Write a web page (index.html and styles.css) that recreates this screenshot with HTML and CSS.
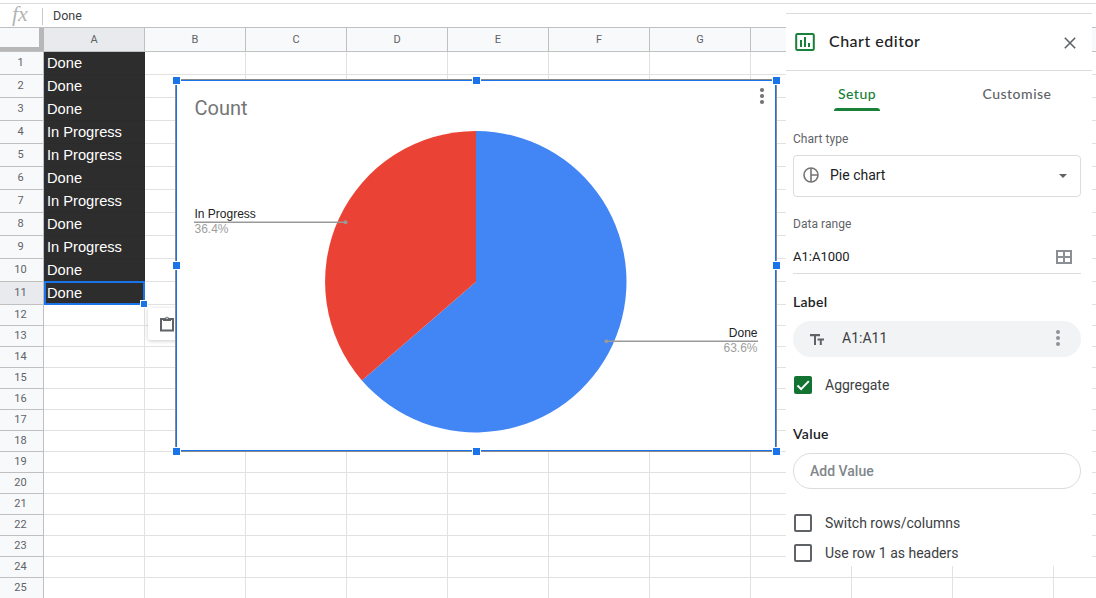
FILE: index.html
```html
<!DOCTYPE html>
<html lang="en">
<head>
    <meta charset="UTF-8">
    <meta name="viewport" content="width=device-width, initial-scale=1.0">
    <title>Chart editor</title>
    <link rel="stylesheet" href="styles.css">
</head>
<body>
    <div class="formula-bar">
        <span class="fx">fx</span>
        <span class="formula">Done</span>
    </div>

    <div class="sheet">
        <div class="col-heads">
            <div class="corner"></div>
            <div class="col-head active">A</div>
            <div class="col-head">B</div>
            <div class="col-head">C</div>
            <div class="col-head">D</div>
            <div class="col-head">E</div>
            <div class="col-head">F</div>
            <div class="col-head">G</div>
            <div class="col-head"></div>
            <div class="col-head"></div>
            <div class="col-head"></div>
        </div>
        <div class="row filled"><div class="row-num">1</div><div class="cell">Done</div><div class="rest"></div></div>
        <div class="row filled"><div class="row-num">2</div><div class="cell">Done</div><div class="rest"></div></div>
        <div class="row filled"><div class="row-num">3</div><div class="cell">Done</div><div class="rest"></div></div>
        <div class="row filled"><div class="row-num">4</div><div class="cell">In Progress</div><div class="rest"></div></div>
        <div class="row filled"><div class="row-num">5</div><div class="cell">In Progress</div><div class="rest"></div></div>
        <div class="row filled"><div class="row-num">6</div><div class="cell">Done</div><div class="rest"></div></div>
        <div class="row filled"><div class="row-num">7</div><div class="cell">In Progress</div><div class="rest"></div></div>
        <div class="row filled"><div class="row-num">8</div><div class="cell">Done</div><div class="rest"></div></div>
        <div class="row filled"><div class="row-num">9</div><div class="cell">In Progress</div><div class="rest"></div></div>
        <div class="row filled"><div class="row-num">10</div><div class="cell">Done</div><div class="rest"></div></div>
        <div class="row filled selected"><div class="row-num">11</div><div class="cell">Done<span class="fill-handle"></span></div><div class="rest"></div></div>
        <div class="row"><div class="row-num">12</div><div class="cell"></div><div class="rest"></div></div>
        <div class="row"><div class="row-num">13</div><div class="cell"></div><div class="rest"></div></div>
        <div class="row"><div class="row-num">14</div><div class="cell"></div><div class="rest"></div></div>
        <div class="row"><div class="row-num">15</div><div class="cell"></div><div class="rest"></div></div>
        <div class="row"><div class="row-num">16</div><div class="cell"></div><div class="rest"></div></div>
        <div class="row"><div class="row-num">17</div><div class="cell"></div><div class="rest"></div></div>
        <div class="row"><div class="row-num">18</div><div class="cell"></div><div class="rest"></div></div>
        <div class="row"><div class="row-num">19</div><div class="cell"></div><div class="rest"></div></div>
        <div class="row"><div class="row-num">20</div><div class="cell"></div><div class="rest"></div></div>
        <div class="row"><div class="row-num">21</div><div class="cell"></div><div class="rest"></div></div>
        <div class="row"><div class="row-num">22</div><div class="cell"></div><div class="rest"></div></div>
        <div class="row"><div class="row-num">23</div><div class="cell"></div><div class="rest"></div></div>
        <div class="row"><div class="row-num">24</div><div class="cell"></div><div class="rest"></div></div>
        <div class="row"><div class="row-num">25</div><div class="cell"></div><div class="rest"></div></div>
    </div>

    <div class="paste-button">
        <svg width="14" height="17" viewBox="0 0 14 17">
            <path d="M1 4h12v11.5H1z" fill="none" stroke="#5f6368" stroke-width="2"/>
            <path d="M3 3h2.2a1.9 1.9 0 0 1 3.6 0H11v3H3z" fill="#5f6368"/>
            <circle cx="7" cy="3.2" r=".8" fill="#fff"/>
        </svg>
    </div>

    <div class="chart">
        <svg class="chart-svg" width="598" height="369" viewBox="177 81 598 369">
            <text class="chart-title" x="194.5" y="115">Count</text>
            <path d="M476 281.7V131A150.7 150.7 0 1 1 361.9 380.4Z" fill="#4285f4"/>
            <path d="M476 281.7L361.9 380.4A150.7 150.7 0 0 1 476 131Z" fill="#ea4335"/>
            <path d="M194 222.2h152M606 341.2h152" stroke="#999" stroke-width="1.5" fill="none"/>
            <circle cx="345.5" cy="222.2" r="2" fill="#999"/>
            <circle cx="606.5" cy="341.2" r="2" fill="#999"/>
            <text class="slice-name" x="194.5" y="218">In Progress</text>
            <text class="slice-pct" x="194.5" y="233">36.4%</text>
            <text class="slice-name" x="757.5" y="337" text-anchor="end">Done</text>
            <text class="slice-pct" x="757.5" y="352" text-anchor="end">63.6%</text>
            <g fill="#757575">
                <circle cx="762" cy="90" r="2.1"/>
                <circle cx="762" cy="96" r="2.1"/>
                <circle cx="762" cy="102" r="2.1"/>
            </g>
        </svg>
        <span class="handle top left"></span>
        <span class="handle top center"></span>
        <span class="handle top right"></span>
        <span class="handle middle left"></span>
        <span class="handle middle right"></span>
        <span class="handle bottom left"></span>
        <span class="handle bottom center"></span>
        <span class="handle bottom right"></span>
    </div>

    <div class="editor">
        <div class="editor-head">
            <svg width="20" height="18" viewBox="0 0 20 18">
                <rect x="1.2" y="1" width="17.6" height="16" rx="1.2" fill="none" stroke="#188038" stroke-width="2"/>
                <path d="M5 7h2v7H5zM9 4h2v10H9zM13 10h2v4h-2z" fill="#188038"/>
            </svg>
            <h2>Chart editor</h2>
            <svg class="close" width="12" height="12" viewBox="0 0 12 12">
                <path d="M.8.8l10.4 10.4M11.2.8L.8 11.2" stroke="#5f6368" stroke-width="1.6"/>
            </svg>
        </div>
        <div class="tabs">
            <div class="tab active">Setup</div>
            <div class="tab">Customise</div>
        </div>
        <div class="editor-body">
            <div class="small-label">Chart type</div>
            <div class="select">
                <svg width="16" height="16" viewBox="0 0 16 16">
                    <path d="M8 1v14M8 8h7" stroke="#757575" stroke-width="1.6"/>
                    <circle cx="8" cy="8" r="7" fill="none" stroke="#757575" stroke-width="1.6"/>
                </svg>
                <span>Pie chart</span>
                <svg class="arrow" width="8" height="4" viewBox="0 0 8 4"><path d="M0 0h8L4 4z" fill="#5f6368"/></svg>
            </div>

            <div class="small-label range-label">Data range</div>
            <div class="range">
                <span>A1:A1000</span>
                <svg width="16" height="14" viewBox="0 0 16 14">
                    <path d="M1 1h14v12H1zM8 1v12M1 7h14" fill="none" stroke="#8b8f94" stroke-width="2"/>
                </svg>
            </div>

            <h3>Label</h3>
            <div class="pill filled-pill">
                <svg class="text-icon" width="14" height="12" viewBox="0 0 14 12">
                    <path d="M0 0h10v2.2H6V11H4V2.2H0zM7.5 4.5H14v2h-2.2V11H9.8V6.5H7.5z" fill="#5f6368"/>
                </svg>
                <span>A1:A11</span>
                <svg class="dots" width="4" height="16" viewBox="0 0 4 16" fill="#8f9398">
                    <circle cx="2" cy="2" r="2"/><circle cx="2" cy="8" r="2"/><circle cx="2" cy="14" r="2"/>
                </svg>
            </div>
            <div class="check aggregate">
                <span class="box checked">
                    <svg width="18" height="18" viewBox="0 0 18 18"><path d="M3.5 9.5l3.6 3.6 7.7-8" fill="none" stroke="#fff" stroke-width="2"/></svg>
                </span>
                <span>Aggregate</span>
            </div>

            <h3 class="value-title">Value</h3>
            <div class="pill add-value">Add Value</div>
            <div class="check switch"><span class="box"></span><span>Switch rows/columns</span></div>
            <div class="check headers"><span class="box"></span><span>Use row 1 as headers</span></div>
        </div>
    </div>
</body>
</html>
```
FILE: styles.css
```css
* {
    box-sizing: border-box;
    margin: 0;
    padding: 0;
}

body {
    position: relative;
    width: 1096px;
    height: 598px;
    overflow: hidden;
    background: #fff;
    font-family: Roboto, sans-serif;
    color: #202124;
}

svg {
    display: block;
    flex: none;
}

/* formula bar */
.formula-bar {
    display: flex;
    align-items: center;
    height: 25px;
    margin-top: 3px;
    border-top: 1px solid #dadce0;
}

.fx {
    width: 43px;
    height: 17px;
    padding-left: 12px;
    border-right: 1px solid #c8c8c8;
    font: italic 22px/11px "Liberation Serif", serif;
    color: #b4b4b4;
}

.formula {
    padding-left: 10px;
    font-size: 12.5px;
    line-height: 16px;
    color: #3c4043;
}

/* sheet */
.col-heads {
    display: flex;
    height: 25px;
    margin-top: -1px;
    border-top: 1px solid #c0c0c0;
    border-bottom: 1px solid #c0c0c0;
    background: #f8f9fa;
}

.corner {
    flex: none;
    width: 44px;
    border-right: 5px solid #b7b7b7;
    border-bottom: 4px solid #b7b7b7;
}

.col-head {
    flex: none;
    width: 101px;
    border-right: 1px solid #c0c0c0;
    font-size: 11px;
    line-height: 24px;
    text-align: center;
    color: #5f6368;
}

.col-head:last-child {
    flex: 1;
    border-right: none;
}

.col-head.active {
    background: #e8eaed;
}

.row {
    display: flex;
    height: 21px;
}

.row.filled {
    height: 23px;
}

.row-num {
    flex: none;
    width: 44px;
    padding-right: 2px;
    border-right: 1px solid #c0c0c0;
    border-bottom: 1px solid #c0c0c0;
    background: #f8f9fa;
    font-size: 11px;
    line-height: 19px;
    text-align: center;
    color: #5f6368;
}

.filled .row-num {
    line-height: 21px;
}

.selected .row-num {
    background: #e8eaed;
}

.cell {
    flex: none;
    width: 101px;
    border-right: 1px solid #e1e1e1;
    border-bottom: 1px solid #e1e1e1;
}

.filled .cell {
    padding-left: 3px;
    border-color: #2b2b2b;
    background: #2d2d2d;
    font: 14.67px/22px "Liberation Sans", Arial, sans-serif;
    color: #fff;
}

.selected .cell {
    position: relative;
    outline: 2px solid #1a73e8;
    outline-offset: -2px;
    margin-top: -1px;
    padding-top: 1px;
}

.fill-handle {
    position: absolute;
    right: -4px;
    bottom: -4px;
    width: 8px;
    height: 8px;
    border: 1px solid #fff;
    background: #1a73e8;
}

.rest {
    flex: 1;
    border-bottom: 1px solid #e1e1e1;
    background: repeating-linear-gradient(to right, transparent 0, transparent 100px, #e1e1e1 100px, #e1e1e1 101px);
}

.paste-button {
    position: absolute;
    left: 148px;
    top: 308px;
    width: 40px;
    height: 32px;
    padding: 7px 12px;
    border-radius: 2px;
    background: #fff;
    box-shadow: 0 1px 4px rgba(0, 0, 0, 0.2);
}

/* chart */
.chart {
    position: absolute;
    left: 175px;
    top: 79px;
    width: 602px;
    height: 373px;
    border: 1px solid #8a8a8a;
    background: #fff;
}

.chart-svg {
    width: 600px;
    height: 371px;
    border: 1px solid #1a73e8;
}

.chart-title {
    font-size: 20px;
    fill: #757575;
}

.slice-name,
.slice-pct {
    font: 12px "Liberation Sans", Arial, sans-serif;
    fill: #222;
}

.slice-pct {
    fill: #9e9e9e;
}

.handle {
    position: absolute;
    width: 9px;
    height: 9px;
    border: 1px solid #fff;
    background: #1a73e8;
}

.handle.top { top: -4px; }
.handle.middle { top: 181px; }
.handle.bottom { top: 367px; }
.handle.left { left: -4px; }
.handle.center { left: 296px; }
.handle.right { left: 596px; }

/* side panel */
.editor {
    position: absolute;
    left: 786px;
    top: 13px;
    width: 306px;
    height: 553px;
    overflow: hidden;
    background: #fff;
}

.editor-head {
    display: flex;
    align-items: center;
    height: 58px;
    padding: 0 16px 0 9px;
    border-top: 1px solid #dadce0;
    border-bottom: 1px solid #dadce0;
}

.editor-head h2 {
    margin: -2px 0 0 14px;
    font: 500 16px/24px "Google Sans", Lato, sans-serif;
    letter-spacing: 0.5px;
}

.close {
    margin: 2px 0 0 auto;
}

.tabs {
    display: flex;
    width: 315px;
    height: 40px;
    margin-left: -9px;
}

.tab {
    display: flex;
    flex: none;
    flex-direction: column;
    align-items: center;
    justify-content: space-between;
    width: 160px;
    padding-top: 14px;
    font: 500 14px/18px "Google Sans", Lato, sans-serif;
    letter-spacing: 0.5px;
    color: #5f6368;
}

.tab:last-child {
    width: 155px;
    padding-left: 5px;
}

.tab.active {
    color: #188038;
}

.tab.active::after {
    content: "";
    width: 46px;
    height: 3px;
    border-radius: 3px 3px 0 0;
    background: #188038;
}

.editor-body {
    width: 295px;
    padding: 20px 0 0 7px;
}

.small-label {
    font-size: 12px;
    line-height: 16px;
    color: #5f6368;
    letter-spacing: 0.05px;
}

.select {
    display: flex;
    align-items: center;
    height: 42px;
    margin-top: 8px;
    padding: 0 13px 2px 9px;
    border: 1px solid #dadce0;
    border-radius: 4px;
    font-size: 14px;
}

.select span {
    margin-left: 11px;
}

.arrow {
    margin: 2px 0 0 auto;
}

.range-label {
    margin-top: 19px;
}

.range {
    display: flex;
    align-items: center;
    justify-content: space-between;
    height: 34px;
    margin-top: 8px;
    padding-right: 9px;
    border-bottom: 1px solid #dadce0;
    font-size: 13px;
}

.editor h3 {
    margin-top: 18px;
    font: 600 14px/20px "Google Sans", Lato, sans-serif;
    letter-spacing: 0.3px;
}

.editor .value-title {
    margin-top: 29px;
}

.pill {
    display: flex;
    align-items: center;
    height: 36px;
    margin-top: 9px;
    padding: 0 21px 0 17px;
    border-radius: 18px;
    font-size: 14px;
}

.filled-pill {
    background: #f1f3f4;
    color: #3c4043;
}

.text-icon {
    margin-top: 2px;
}

.filled-pill span {
    margin: -2px 0 0 18px;
}

.dots {
    margin: -2px 0 0 auto;
}

.add-value {
    padding-left: 16px;
    border: 1px solid #dadce0;
    font-weight: 500;
    color: #80868b;
}

.check {
    display: flex;
    align-items: center;
    height: 20px;
    padding-left: 1px;
    font-size: 14px;
    color: #3c4043;
}

.aggregate {
    margin-top: 18px;
}

.switch {
    margin-top: 24px;
}

.headers {
    margin-top: 10px;
}

.box {
    width: 18px;
    height: 18px;
    margin-right: 13px;
    border: 2px solid #5f6368;
    border-radius: 2px;
}

.box.checked {
    border: none;
    background: #137333;
}
```
